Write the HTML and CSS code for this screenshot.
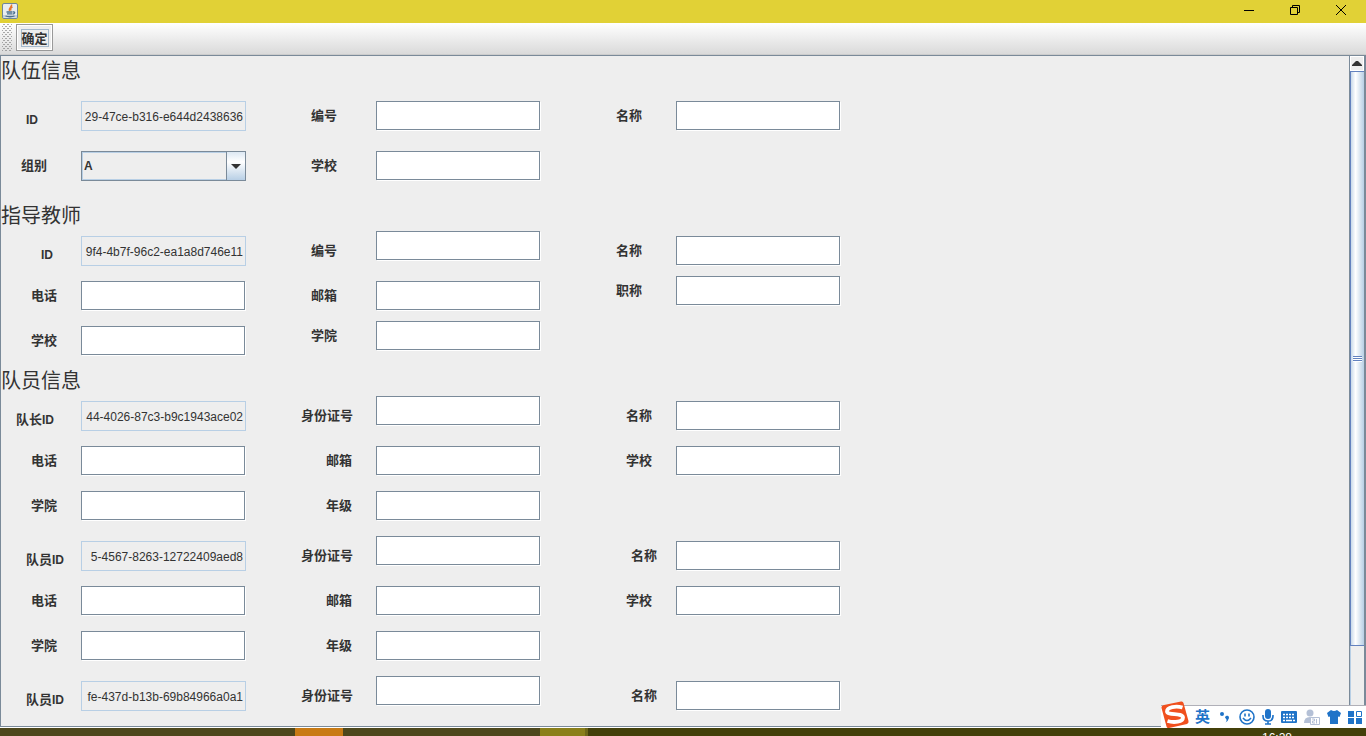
FILE: index.html
```html
<!DOCTYPE html>
<html lang="zh-CN">
<head>
  <meta charset="UTF-8">
  <meta name="viewport" content="width=device-width, initial-scale=1.0">
  <title>队伍信息</title>
  <link rel="stylesheet" href="styles.css">
</head>
<body>
  <header class="titlebar">
    <svg class="java-icon" width="16" height="16" viewBox="0 0 16 16">
      <rect x="0.5" y="0.5" width="15" height="15" rx="1.5" fill="#e9edf0" stroke="#6f8799"/>
      <path d="M1 12h14v2.500h-14z" fill="#c3ced8"/>
      <path d="M9.500 1.500C10.500 4 6 4.500 7.500 8M10.500 4C8 5 8.500 6 9 7.500" fill="none" stroke="#e8762c" stroke-width="1.500"/>
      <path d="M4.500 9h6M5 10.800h5M11 9c2.500-.5 2 2-.5 2M3.500 13c2 1 7 1 9 0" fill="none" stroke="#4b708f" stroke-width="1.300"/>
    </svg>
    <div class="window-buttons">
      <button type="button" aria-label="最小化"><svg width="12" height="12" viewBox="0 0 12 12"><path d="M1 6.500h10" stroke="#000"/></svg></button>
      <button type="button" aria-label="还原"><svg width="12" height="12" viewBox="0 0 12 12"><path d="M1.500 3.500h7v7h-7zM3.500 3.500v-2h7v7h-2" fill="none" stroke="#000"/></svg></button>
      <button type="button" aria-label="关闭"><svg width="12" height="12" viewBox="0 0 12 12"><path d="M1 1l10 10M11 1L1 11" stroke="#000"/></svg></button>
    </div>
  </header>

  <div class="toolbar">
    <span class="grip"></span>
    <button type="submit" form="teamForm" class="ok-button"><span>确定</span></button>
  </div>

  <main class="scroll-pane">
    <form class="form" id="teamForm">
      <section class="section team">
        <h2>队伍信息</h2>
        <div class="row">
          <div class="field"><label class="in-25 low" for="teamId"><span class="latin">ID</span></label><input type="text" id="teamId" value="29-47ce-b316-e644d2438636" readonly></div>
          <div class="field"><label class="in-15" for="teamNo">编号</label><input type="text" id="teamNo"></div>
          <div class="field"><label class="in-20" for="teamName">名称</label><input type="text" id="teamName"></div>
        </div>
        <div class="row">
          <div class="field">
            <label class="in-20" for="teamGroup">组别</label>
            <div class="combo">
              <select id="teamGroup">
                <option>A</option>
                <option>B</option>
              </select>
              <span class="combo-arrow"></span>
            </div>
          </div>
          <div class="field"><label class="in-15" for="teamSchool">学校</label><input type="text" id="teamSchool"></div>
        </div>
      </section>

      <section class="section teacher">
        <h2>指导教师</h2>
        <div class="row">
          <div class="field"><label class="in-40 low" for="teacherId"><span class="latin">ID</span></label><input type="text" id="teacherId" value="9f4-4b7f-96c2-ea1a8d746e11" readonly></div>
          <div class="field raised"><label class="in-15" for="teacherNo">编号</label><input type="text" id="teacherNo"></div>
          <div class="field"><label class="in-20" for="teacherName">名称</label><input type="text" id="teacherName"></div>
        </div>
        <div class="row">
          <div class="field"><label class="in-30" for="teacherPhone">电话</label><input type="text" id="teacherPhone"></div>
          <div class="field"><label class="in-15" for="teacherMail">邮箱</label><input type="text" id="teacherMail"></div>
          <div class="field top"><label class="in-20" for="teacherTitle">职称</label><input type="text" id="teacherTitle"></div>
        </div>
        <div class="row">
          <div class="field"><label class="in-30" for="teacherSchool">学校</label><input type="text" id="teacherSchool"></div>
          <div class="field top"><label class="in-15" for="teacherCollege">学院</label><input type="text" id="teacherCollege"></div>
        </div>
      </section>

      <section class="section members">
        <h2>队员信息</h2>
        <div class="member">
          <div class="row">
            <div class="field"><label class="in-15 low" for="leaderId">队长<span class="latin">ID</span></label><input type="text" id="leaderId" value="44-4026-87c3-b9c1943ace02" readonly></div>
            <div class="field raised"><label class="in-5" for="leaderCard">身份证号</label><input type="text" id="leaderCard"></div>
            <div class="field"><label class="in-30" for="leaderName">名称</label><input type="text" id="leaderName"></div>
          </div>
          <div class="row">
            <div class="field"><label class="in-30" for="leaderPhone">电话</label><input type="text" id="leaderPhone"></div>
            <div class="field"><label class="in-30" for="leaderMail">邮箱</label><input type="text" id="leaderMail"></div>
            <div class="field"><label class="in-30" for="leaderSchool">学校</label><input type="text" id="leaderSchool"></div>
          </div>
          <div class="row">
            <div class="field"><label class="in-30" for="leaderCollege">学院</label><input type="text" id="leaderCollege"></div>
            <div class="field"><label class="in-30" for="leaderGrade">年级</label><input type="text" id="leaderGrade"></div>
          </div>
        </div>
        <div class="member">
          <div class="row">
            <div class="field"><label class="in-25 low" for="member1Id">队员<span class="latin">ID</span></label><input type="text" id="member1Id" value="5-4567-8263-12722409aed8" readonly></div>
            <div class="field raised"><label class="in-5" for="member1Card">身份证号</label><input type="text" id="member1Card"></div>
            <div class="field"><label class="in-35" for="member1Name">名称</label><input type="text" id="member1Name"></div>
          </div>
          <div class="row">
            <div class="field"><label class="in-30" for="member1Phone">电话</label><input type="text" id="member1Phone"></div>
            <div class="field"><label class="in-30" for="member1Mail">邮箱</label><input type="text" id="member1Mail"></div>
            <div class="field"><label class="in-30" for="member1School">学校</label><input type="text" id="member1School"></div>
          </div>
          <div class="row">
            <div class="field"><label class="in-30" for="member1College">学院</label><input type="text" id="member1College"></div>
            <div class="field"><label class="in-30" for="member1Grade">年级</label><input type="text" id="member1Grade"></div>
          </div>
        </div>
        <div class="member">
          <div class="row">
            <div class="field"><label class="in-25 low" for="member2Id">队员<span class="latin">ID</span></label><input type="text" id="member2Id" value="fe-437d-b13b-69b84966a0a1" readonly></div>
            <div class="field raised"><label class="in-5" for="member2Card">身份证号</label><input type="text" id="member2Card"></div>
            <div class="field"><label class="in-35" for="member2Name">名称</label><input type="text" id="member2Name"></div>
          </div>
        </div>
      </section>
    </form>

    <div class="scrollbar">
      <button type="button" class="scroll-up" aria-label="向上滚动"><svg width="10" height="5" viewBox="0 0 10 5"><path d="M0 5V4L4 0h2l4 4v1z" fill="#333"/></svg></button>
      <div class="thumb"><span class="thumb-grip"></span></div>
      <div class="track"></div>
    </div>
  </main>

  <footer class="taskbar">
    <span class="task-orange"></span>
    <span class="task-olive"></span>
    <span class="clock">16:28</span>
  </footer>

  <div class="ime">
    <svg class="ime-logo" width="28" height="28" viewBox="0 0 28 28">
      <path d="M3 4L20 0.500Q22 0 22.500 2L27.500 20Q28 22 26 23L8 27Q6 27.500 5.500 25.500L0.500 7Q0 5 3 4z" fill="#f0501e"/>
      <path d="M21.500 6.500C15 4.500 6 6 6 10.500C6.500 14.500 21.500 11.500 22 16.500C22 21 13 22 6.500 20" fill="none" stroke="#fff" stroke-width="3.800"/>
    </svg>
    <span class="ime-lang">英</span>
    <svg width="12" height="16" viewBox="0 0 12 16"><circle cx="2" cy="5" r="2" fill="#1f73c8"/><path d="M5 8.500a2 2 0 1 1 3.500 1.500Q8 12.500 5.500 13.500Q7 12 6.500 10.500z" fill="#1f73c8"/></svg>
    <svg width="16" height="16" viewBox="0 0 16 16"><circle cx="8" cy="8" r="7" fill="none" stroke="#1f73c8" stroke-width="1.600"/><path d="M6 4.500v3M10 4.500v3M4 9q4 5 8 0" fill="none" stroke="#1f73c8" stroke-width="1.600"/></svg>
    <svg width="12" height="16" viewBox="0 0 12 16"><rect x="3" y="0" width="6" height="10" rx="3" fill="#1f73c8"/><path d="M1 6v1q0 5 5 5t5-5v-1M6 12v3M3 15h6" fill="none" stroke="#1f73c8" stroke-width="1.600"/></svg>
    <svg width="16" height="16" viewBox="0 0 16 16"><rect x="0" y="2" width="16" height="12" rx="1" fill="#1f73c8"/><path d="M2 5.500h12M2 8.500h12" stroke="#fff" stroke-width="1.500" stroke-dasharray="2 1"/><path d="M2 11.500h2M5 11.500h6M12 11.500h2" stroke="#fff" stroke-width="1.500"/></svg>
    <svg width="16" height="16" viewBox="0 0 16 16"><circle cx="6" cy="4" r="3.500" fill="#b4c0d6"/><path d="M0 14q0-6 6-6h2v6z" fill="#b4c0d6"/><path d="M6.500 8.500h9v7h-9z" fill="#fff" stroke="#b4c0d6"/><path d="M8 10h2.500v2h-2v2H11M12.500 10v4.500" fill="none" stroke="#b4c0d6"/></svg>
    <svg width="14" height="16" viewBox="0 0 14 16"><path d="M4 1q3 2 6 0l4 3-1.500 4-1.500-.5V15H3V7.500L1.500 8 0 4z" fill="#1f73c8"/></svg>
    <svg width="14" height="16" viewBox="0 0 14 16"><path d="M0 2h6v6H0zM0 9h6v6H0zM8 9h6v6H8z" fill="#1f73c8"/><path d="M8.500 2.500h5v5h-5z" fill="none" stroke="#1f73c8"/></svg>
  </div>

  <script>
    // Show the tail of each generated ID
    document.querySelectorAll('input[readonly]').forEach(function (input) {
      input.scrollLeft = input.scrollWidth;
    });
  </script>
</body>
</html>
```
FILE: styles.css
```css
* {
  box-sizing: border-box;
}
body {
  display: flex;
  flex-direction: column;
  height: 100vh;
  margin: 0;
  overflow: hidden;
  background-color: #eee;
  color: #333;
  font-family: "Liberation Sans", "Noto Sans CJK SC", sans-serif;
  font-size: 13px;
}
button {
  padding: 0;
  border: none;
  background: none;
  color: inherit;
  font: inherit;
}
svg {
  display: block;
}

/* title bar */
.titlebar {
  display: flex;
  flex: none;
  justify-content: space-between;
  height: 23px;
  padding-left: 2px;
  background-color: #e1d136;
}
.java-icon {
  margin-top: 3px;
}
.window-buttons {
  display: flex;
  padding-right: 2px;
}
.window-buttons button {
  display: flex;
  justify-content: center;
  width: 46px;
  padding-top: 4px;
}

/* tool bar */
.toolbar {
  display: flex;
  flex: none;
  gap: 4px;
  height: 32px;
  padding: 1px 2px 3px;
  border-bottom: 1px solid #ccc;
  background: linear-gradient(#fff, #dadada);
}
.grip {
  width: 10px;
  background-image: conic-gradient(#777 25%, transparent 0), conic-gradient(#777 25%, transparent 0);
  background-position: -1px 0, 1px 2px;
  background-size: 4px 4px;
  -webkit-mask: repeating-linear-gradient(#000 0 1px, transparent 1px 2px);
  mask: repeating-linear-gradient(#000 0 1px, transparent 1px 2px);
  opacity: 0.6;
}
.ok-button {
  width: 37px;
  height: 27px;
  border: 1px solid #999;
  box-shadow: inset -1px -1px #fff, inset 1px 1px #fff;
  background-color: #eee;
  font-weight: bold;
}
.ok-button span {
  display: block;
  width: 28px;
  height: 18px;
  margin: 0 auto;
  border: 1px solid #a3b8cc;
  line-height: 18px;
}

/* form */
.scroll-pane {
  display: flex;
  flex: 1;
  min-height: 0;
  border: 1px solid #7a8a99;
  border-right: 2px solid #7a8a99;
}
.form {
  flex: 1;
  overflow: hidden;
}
.section h2 {
  height: 30px;
  margin: 0;
  font-size: 20px;
  font-weight: normal;
  line-height: 30px;
}
.row {
  display: grid;
  grid-template-columns: 295px 300px 1fr;
  height: 35px;
  margin-bottom: 10px;
}
.team h2 {
  margin-bottom: 10px;
}
.team .row {
  margin-bottom: 15px;
}
.team {
  padding-bottom: 5px;
}
.member {
  padding-bottom: 5px;
}
.field {
  display: flex;
  align-items: flex-end;
}
.field.raised input,
.field.top {
  align-self: flex-start;
}
label {
  width: 80px;
  height: 30px;
  font-weight: bold;
  line-height: 30px;
  white-space: nowrap;
}
.low {
  line-height: 38px;
}
.latin {
  font-size: 12px;
}
.in-5 { padding-left: 5px; }
.in-15 { padding-left: 15px; }
.in-20 { padding-left: 20px; }
.in-25 { padding-left: 25px; }
.in-30 { padding-left: 30px; }
.in-35 { padding-left: 35px; }
.in-40 { padding-left: 40px; }

input {
  width: 164px;
  height: 29px;
  margin-bottom: 1px;
  padding: 0 2px;
  border: 1px solid #7a8a99;
  border-radius: 0;
  outline: none;
  box-shadow: 1px 1px #fff;
  background-color: #fff;
  color: #333;
  font-family: inherit;
  font-size: 12px;
}
input[readonly] {
  width: 165px;
  height: 30px;
  margin-bottom: 0;
  padding: 2px 2px 0 1px;
  border-color: #b8cfe5;
  box-shadow: none;
  background-color: #eee;
  text-align: right;
}
.combo {
  display: grid;
  grid-template-columns: 1fr 20px;
  width: 165px;
  height: 30px;
}
.combo select {
  grid-area: 1 / 1 / 2 / 3;
  padding: 0 2px;
  border: 1px solid #7a8a99;
  border-radius: 0;
  outline: none;
  box-shadow: inset 0 0 0 1px #b8cfe5;
  appearance: none;
  background-color: #eee;
  color: #333;
  font-family: inherit;
  font-size: 12px;
  font-weight: bold;
}
.combo-arrow {
  display: flex;
  grid-area: 1 / 2 / 2 / 3;
  align-items: center;
  justify-content: center;
  border: 1px solid #7a8a99;
  background: linear-gradient(#dde8f3, #fff 35%, #b8cfe5);
  pointer-events: none;
}
.combo-arrow::before {
  content: "";
  border: 5px solid transparent;
  border-top-color: #333;
  border-bottom: none;
}

/* scroll bar */
.scrollbar {
  display: flex;
  flex: none;
  flex-direction: column;
  width: 15px;
  border-left: 1px solid #7a8a99;
}
.scroll-up {
  display: flex;
  flex: none;
  align-items: center;
  justify-content: center;
  height: 15px;
  border: 1px solid #fff;
}
.thumb {
  display: flex;
  flex: 575;
  align-items: center;
  justify-content: center;
  border: solid #6382bf;
  border-width: 1px 0 1px 1px;
  background: linear-gradient(to right, #c8d9ea, #fff 35%, #b8cfe5);
}
.thumb-grip {
  width: 9px;
  height: 6px;
  background: repeating-linear-gradient(#6382bf 0 1px, #fff 1px 2px);
}
.track {
  flex: 80;
  border-left: 1px solid #b8cfe5;
}

/* desktop task bar */
.taskbar {
  display: flex;
  flex: none;
  height: 9px;
  overflow: hidden;
  padding-left: 295px;
  border-top: 1px solid #fff;
  background: linear-gradient(to right, #4d471c 540px, #43400a 590px);
}
.task-orange {
  width: 48px;
  background-color: #c87a14;
}
.task-olive {
  width: 48px;
  margin-left: 197px;
  border-right: 3px solid #6e6718;
  background-color: #8a7f1a;
}
.clock {
  margin: 3px 74px 0 auto;
  color: #fff;
  font-size: 12px;
  line-height: 14px;
}

/* floating input method bar */
.ime {
  position: absolute;
  right: 0;
  bottom: 8px;
  display: flex;
  gap: 7px;
  align-items: center;
  height: 23px;
  padding: 0 4px 0 34px;
  border-top: 1px solid #b0b0b8;
  background-color: #fff;
}
.ime-logo {
  position: absolute;
  left: 0;
  bottom: -1px;
}
.ime-lang {
  padding-right: 3px;
  color: #1f73c8;
  font-size: 15px;
  font-weight: bold;
  line-height: 22px;
}
```
